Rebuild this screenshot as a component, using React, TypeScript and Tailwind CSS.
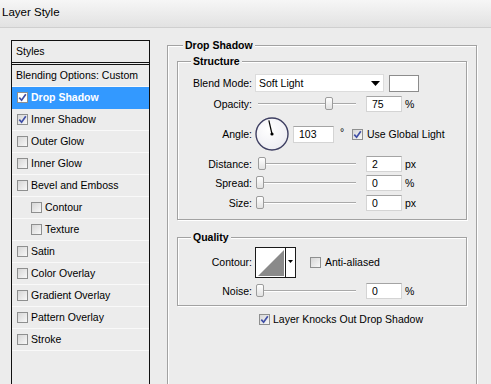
import React from "react";

type StyleRow = {
  label: string;
  check?: boolean;
  indent?: boolean;
  selected?: boolean;
  header?: boolean;
};

const styleRows: StyleRow[] = [
  { label: "Blending Options: Custom" },
  { label: "Drop Shadow", check: true, selected: true },
  { label: "Inner Shadow", check: true },
  { label: "Outer Glow", check: false },
  { label: "Inner Glow", check: false },
  { label: "Bevel and Emboss", check: false },
  { label: "Contour", check: false, indent: true },
  { label: "Texture", check: false, indent: true },
  { label: "Satin", check: false },
  { label: "Color Overlay", check: false },
  { label: "Gradient Overlay", check: false },
  { label: "Pattern Overlay", check: false },
  { label: "Stroke", check: false },
];

const Box = ({ checked = false, white = false }: { checked?: boolean; white?: boolean }) => (
  <span
    className={`flex h-[11px] w-[11px] shrink-0 items-center justify-center border border-[#8e8f8f] ${
      white ? "bg-white" : "bg-gradient-to-br from-[#d6d6d6] to-[#f8f8f8]"
    }`}
  >
    {checked && (
      <svg width="9" height="9" viewBox="0 0 9 9">
        <path d="M1.3 4.6 L3.6 7.2 L7.8 1.2" stroke="#3f4ea6" strokeWidth="1.7" fill="none" />
      </svg>
    )}
  </span>
);

const Slider = ({ value }: { value: number }) => (
  <div className="relative h-[16px] w-[100px]">
    <div className="absolute left-[2px] right-0 top-[7px] h-px bg-[#a9a9a9] shadow-[0_1px_0_#fff]" />
    <div
      className="absolute top-[1px] h-[13px] w-[8px] rounded-[2px] border border-[#9c9c9c] bg-gradient-to-b from-white to-[#e2e2e2]"
      style={{ left: `${(value / 100) * 92}px` }}
    />
  </div>
);

const Field = ({ value, className = "" }: { value: string; className?: string }) => (
  <div
    className={`flex items-center border border-[#d4d4d4] border-t-[#a4a4a4] bg-white pl-[5px] ${className}`}
  >
    {value}
  </div>
);

const Row = ({
  label,
  className = "",
  children,
}: {
  label: string;
  className?: string;
  children: React.ReactNode;
}) => (
  <div className={`flex items-center ${className}`}>
    <span className="w-[74px] text-right">{label}</span>
    {children}
  </div>
);

const SliderRow = ({
  label,
  value,
  unit,
  className = "",
}: {
  label: string;
  value: number;
  unit: string;
  className?: string;
}) => (
  <Row label={label} className={`h-[16px] ${className}`}>
    <div className="ml-[4px]">
      <Slider value={value} />
    </div>
    <Field value={String(value)} className="ml-[10px] h-[16px] w-[36px]" />
    <span className="ml-[3px]">{unit}</span>
  </Row>
);

const Group = ({
  title,
  className = "",
  labelLeft = "left-[13px]",
  children,
}: {
  title: string;
  className?: string;
  labelLeft?: string;
  children: React.ReactNode;
}) => (
  <div
    className={`relative border border-[#a2a2a2] shadow-[1px_1px_0_#fff,inset_1px_1px_0_#fff] ${className}`}
  >
    <span className={`absolute -top-[7px] ${labelLeft} bg-[#ececec] px-[2px] font-bold leading-[13px]`}>
      {title}
    </span>
    {children}
  </div>
);

const AngleDial = ({ angle }: { angle: number }) => {
  const r = (angle * Math.PI) / 180;
  const x = 17 + Math.cos(r) * 14;
  const y = 17 - Math.sin(r) * 14;
  return (
    <svg width="34" height="34" viewBox="0 0 34 34">
      <defs>
        <radialGradient id="dial" cx="0.4" cy="0.35" r="0.7">
          <stop offset="0" stopColor="#ffffff" />
          <stop offset="1" stopColor="#ececf2" />
        </radialGradient>
      </defs>
      <circle cx="17" cy="17" r="16" fill="url(#dial)" stroke="#3e3f62" strokeWidth="1.4" />
      <line x1="17" y1="17" x2={x} y2={y} stroke="#000" strokeWidth="1.2" />
      <circle cx="17" cy="17" r="1.6" fill="#000" />
    </svg>
  );
};

export default function App() {
  return (
    <div className="h-[384px] w-[491px] overflow-hidden bg-[#ececec] font-['Liberation_Sans',Arial,sans-serif] text-[10.5px] leading-[13px] text-black">
      <div className="h-[28px] border-b border-[#cfcfcf] bg-gradient-to-b from-[#f6f6f6] to-[#e2e2e2] pl-[2px] pt-[5px] text-[11.5px] leading-[14px]">
        Layer Style
      </div>

      <div className="flex">
        <div className="ml-[11px] mt-[12px] h-[360px] w-[139px] border border-[#111]">
          <div className="flex h-[22px] items-center border-b border-[#111] pl-[4px]">Styles</div>
          <div className="h-[2px] border-b border-[#111]" />
          {styleRows.map((row) => (
            <div
              key={row.label}
              className={`flex h-[22px] items-center gap-[3px] border-b ${
                row.selected ? "border-[#3399ff] bg-[#3399ff] font-bold text-white" : "border-[#f9f9f9]"
              } ${row.indent ? "pl-[19px]" : row.check === undefined ? "pl-[4px]" : "pl-[5px]"}`}
            >
              {row.check !== undefined && <Box checked={row.check} white={row.selected} />}
              <span>{row.label}</span>
            </div>
          ))}
        </div>

        <Group
          title="Drop Shadow"
          labelLeft="left-[15px]"
          className="ml-[17px] mt-[17px] h-[380px] w-[310px] px-[9px] pt-[15px]"
        >
          <Group title="Structure" className="h-[159px]">
            <Row label="Blend Mode:" className="mt-[12px] h-[18px]">
              <div className="ml-[3px] flex h-[18px] w-[129px] items-center justify-between border border-[#dcdcdc] bg-white pl-[3px] pr-[3px]">
                <span>Soft Light</span>
                <svg width="9" height="5" viewBox="0 0 9 5">
                  <path d="M0 0 H9 L4.5 5 Z" fill="#000" />
                </svg>
              </div>
              <div className="ml-[5px] h-[17px] w-[30px] border border-[#8c8c8c] bg-white" />
            </Row>

            <SliderRow label="Opacity:" value={75} unit="%" className="mt-[4px]" />

            <Row label="Angle:" className="mt-[5px] h-[34px]">
              <div className="ml-[3px] h-[34px] w-[34px]">
                <AngleDial angle={103} />
              </div>
              <Field value="103" className="ml-[4px] h-[17px] w-[41px]" />
              <span className="ml-[6px] w-[12px] self-start pt-[9px]">°</span>
              <Box checked />
              <span className="ml-[4px]">Use Global Light</span>
            </Row>

            <SliderRow label="Distance:" value={2} unit="px" className="mt-[5px]" />
            <SliderRow label="Spread:" value={0} unit="%" className="mt-[3px]" />
            <SliderRow label="Size:" value={0} unit="px" className="mt-[4px]" />
          </Group>

          <Group title="Quality" className="mt-[17px] h-[69px]">
            <Row label="Contour:" className="mt-[9px] h-[31px]">
              <div className="ml-[3px] flex h-[31px] w-[41px] border border-[#1a1a1a] bg-white">
                <svg width="29" height="29" viewBox="0 0 29 29" className="shrink-0">
                  <polygon points="2,28 28,2 28,28" fill="#8a8a8a" />
                </svg>
                <div className="flex flex-1 justify-center border-l border-[#1a1a1a] pt-[12px]">
                  <svg width="5" height="3" viewBox="0 0 5 3">
                    <path d="M0 0 H5 L2.5 3 Z" fill="#000" />
                  </svg>
                </div>
              </div>
              <div className="ml-[14px]">
                <Box />
              </div>
              <span className="ml-[4px]">Anti-aliased</span>
            </Row>
            <SliderRow label="Noise:" value={0} unit="%" className="mt-[5px]" />
          </Group>

          <div className="ml-[82px] mt-[7px] flex h-[13px] items-center gap-[3px]">
            <Box checked />
            <span>Layer Knocks Out Drop Shadow</span>
          </div>
        </Group>
      </div>
    </div>
  );
}
